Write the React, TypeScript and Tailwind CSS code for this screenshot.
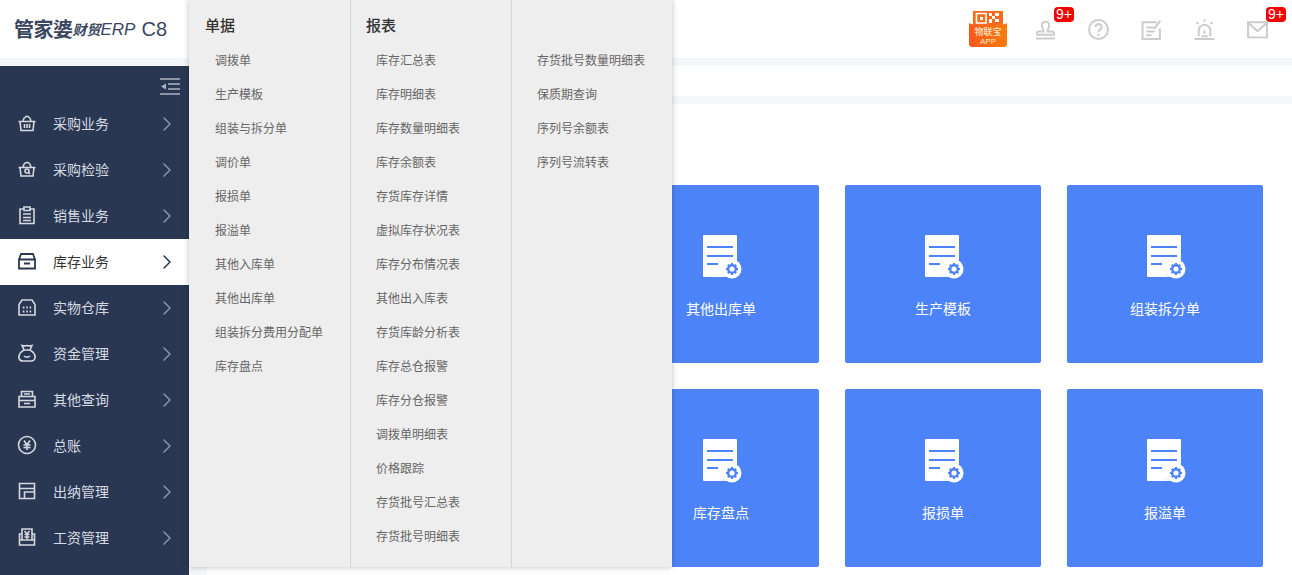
import { ChevronRight } from 'lucide-react';
import type { ReactNode } from 'react';

const font = "font-['Microsoft_YaHei','Noto_Sans_CJK_SC','Noto_Sans',sans-serif]";

const Stroke = ({ children, size = 20 }: { children: ReactNode; size?: number }) => (
  <svg width={size} height={size} viewBox="0 0 20 20" fill="none" stroke="currentColor" strokeWidth="1.6">
    {children}
  </svg>
);

const menuItems: { label: string; active?: boolean; icon: ReactNode }[] = [
  {
    label: '采购业务',
    icon: (
      <Stroke>
        <path d="M1.500 8.500h17M3 8.500l1 9h12l1-9M6 8.500c.5-3.500 2-5 4-5s3.500 1.500 4 5M8 3.500h4M7.500 11v4M10 11v4M12.500 11v4" />
      </Stroke>
    ),
  },
  {
    label: '采购检验',
    icon: (
      <Stroke>
        <path d="M1.500 8.500h17M3 8.500l1 8.500h12l1-8.500M6 8.500c.5-3.500 2-5 4-5s3.500 1.500 4 5" />
        <circle cx="10" cy="12" r="2" />
        <path d="M11.500 13.500l1.500 1.500" />
      </Stroke>
    ),
  },
  {
    label: '销售业务',
    icon: (
      <Stroke>
        <path d="M7 4H3v14.500h14V4h-4M7 2h6v3.500H7zM6 9h8M6 12.500h8M6 15.500h8" />
      </Stroke>
    ),
  },
  {
    label: '库存业务',
    active: true,
    icon: (
      <Stroke>
        <path strokeWidth="1.800" d="M2 8.500v9h16v-9zM2 8.500l2-5.500h12l2 5.500M7 12.500h6" />
      </Stroke>
    ),
  },
  {
    label: '实物仓库',
    icon: (
      <Stroke>
        <path d="M2 7.500v10.500h16V7.500L15 3H5z" />
        <path strokeWidth="1.800" d="M5.800 10.500h1.600M9.200 10.500h1.600M12.600 10.500h1.600M5.800 14.500h1.600M9.200 14.500h1.600M12.600 14.500h1.600" />
      </Stroke>
    ),
  },
  {
    label: '资金管理',
    icon: (
      <Stroke>
        <path d="M7 7C3.500 9 1.500 12 2 15c.3 2 2 3 4 3h8c2 0 3.700-1 4-3 .5-3-1.500-6-5-8l2-4.500c-2 .5-3.500.5-5 0-1.500.5-3 .5-5 0zM7 7h6M7 13c1.500 1.500 4.500 1.500 6 0" />
      </Stroke>
    ),
  },
  {
    label: '其他查询',
    icon: (
      <Stroke>
        <path d="M4.500 7V2.500h11V7M2 7.500h16v4H2zM2 11.500V18h16v-6.500M7 5h6M7 14.500h6" />
      </Stroke>
    ),
  },
  {
    label: '总账',
    icon: (
      <Stroke>
        <circle cx="10" cy="10" r="8.500" />
        <path d="M7 5.500l3 4.500 3-4.500M6.500 10h7M6.500 12.500h7M10 10v5" />
      </Stroke>
    ),
  },
  {
    label: '出纳管理',
    icon: (
      <Stroke>
        <path d="M2.500 2.500h15v15h-15zM2.500 7.500h15M7.500 17.500v-6.500h10" />
      </Stroke>
    ),
  },
  {
    label: '工资管理',
    icon: (
      <Stroke>
        <path d="M5 7H2.500v11h15V7H15M5 13V2h10v11M2.500 13h15M7.500 4l2.500 3 2.500-3M7.500 7.500h5M7.500 10h5M10 7v5" />
      </Stroke>
    ),
  },
];

const billItems = ['调拨单', '生产模板', '组装与拆分单', '调价单', '报损单', '报溢单', '其他入库单', '其他出库单', '组装拆分费用分配单', '库存盘点'];
const reportItems = [
  '库存汇总表', '库存明细表', '库存数量明细表', '库存余额表', '存货库存详情', '虚拟库存状况表', '库存分布情况表', '其他出入库表',
  '存货库龄分析表', '库存总仓报警', '库存分仓报警', '调拨单明细表', '价格跟踪', '存货批号汇总表', '存货批号明细表',
];
const reportItems2 = ['存货批号数量明细表', '保质期查询', '序列号余额表', '序列号流转表'];

function FlyoutColumn({ title, items, className }: { title?: string; items: string[]; className: string }) {
  return (
    <div className={`h-full ${className}`}>
      <div className="h-[43px] pt-[14px] text-[15px] leading-[22px] font-medium text-[#333]">{title}</div>
      <ul className="pl-[10px]">
        {items.map((item) => (
          <li key={item} className="h-[34px] text-[12px] leading-[34px] text-[#666] whitespace-nowrap">
            {item}
          </li>
        ))}
      </ul>
    </div>
  );
}

function DocIcon() {
  return (
    <svg width="40" height="44" viewBox="0 0 40 44">
      <defs>
        <linearGradient id="docfade" x1="0" y1="0" x2="1" y2="1">
          <stop offset="0.7" stopColor="#ffffff" />
          <stop offset="1" stopColor="#c5d7fd" />
        </linearGradient>
      </defs>
      <rect x="0" y="0" width="34" height="42" rx="1" fill="url(#docfade)" />
      <path d="M4 12h26M4 21h26M4 29h11" stroke="#4d83f9" strokeWidth="2" />
      <circle cx="29" cy="34" r="9.500" fill="#fff" />
      <circle cx="29" cy="34" r="3.800" fill="none" stroke="#4d83f9" strokeWidth="2.400" />
      <path d="M29 28v2M29 38v2M23 34h2M33 34h2M24.800 29.800l1.400 1.400M31.800 36.800l1.400 1.400M24.800 38.200l1.400-1.400M31.800 31.200l1.400-1.400" stroke="#4d83f9" strokeWidth="2" />
    </svg>
  );
}

function Card({ label }: { label: string }) {
  return (
    <div className="h-[178px] rounded-[2px] bg-[#4d83f9] flex flex-col items-center pt-[50px] pl-[4px]">
      <DocIcon />
      <div className="mt-[18px] -ml-[4px] text-[14px] leading-[22px] text-white">{label}</div>
    </div>
  );
}

function Badge() {
  return (
    <span className="absolute -top-[12px] left-[19px] w-5 h-[15px] rounded-[4px] bg-[#f40000] text-white text-[14px] leading-[15px] text-center font-['Liberation_Sans',sans-serif]">
      9+
    </span>
  );
}

export default function App() {
  return (
    <div className={`relative h-[575px] w-[1292px] overflow-hidden bg-white flex ${font}`}>
      {/* Left column */}
      <div className="w-[189px] shrink-0 flex flex-col">
        <div className="h-[58px] flex items-center pl-[14px] text-[#3a4660] whitespace-nowrap">
          <span className="text-[20px] leading-none font-bold tracking-[-0.5px]">管家婆</span>
          <span className="text-[14px] leading-none italic font-bold">财贸</span>
          <span className="text-[17px] leading-none italic font-['Liberation_Sans',sans-serif]">ERP</span>
          <span className="ml-[6px] text-[20px] leading-none font-['Liberation_Sans',sans-serif]">C8</span>
        </div>
        <div className="h-2 bg-[#f3f7f7]" />
        <div className="flex-1 bg-[#2a3752]">
          <div className="h-[35px] pt-3 flex items-start justify-end pr-[9px]">
            <svg width="20" height="17" viewBox="0 0 20 17" fill="none" stroke="#aeb4c0" strokeWidth="1.400">
              <path d="M0 1h20M8 6h12M8 11h12M0 16h20" />
              <path d="M1 8.500L6 5.500v6z" fill="#aeb4c0" stroke="none" />
            </svg>
          </div>
          {menuItems.map((m) => (
            <div
              key={m.label}
              className={`h-[46px] pb-[2px] flex items-center pl-[17px] pr-[10px] text-[14px] ${
                m.active ? 'bg-white text-[#333]' : 'text-[#d5dae3]'
              }`}
            >
              <span className={m.active ? 'text-[#2a3752]' : 'text-[#d5d8de]'}>{m.icon}</span>
              <span className="ml-4 flex-1">{m.label}</span>
              <ChevronRight size={24} strokeWidth={1.500} className={`mt-[2px] ${m.active ? 'text-[#2a3752]' : 'text-[#8593ad]'}`} />
            </div>
          ))}
        </div>
      </div>

      {/* Right column */}
      <div className="flex-1 flex flex-col">
        <div className="h-[58px] flex items-center justify-end pr-[25px] text-[#cccccc]">
          <div className="relative w-[38px] h-[38px] mr-[28px]">
            <svg width="38" height="38" viewBox="0 0 38 38" className="absolute inset-0">
              <defs>
                <linearGradient id="appfill" x1="0" y1="0" x2="1" y2="0">
                  <stop offset="0" stopColor="#f9581c" />
                  <stop offset="1" stopColor="#fd7a0a" />
                </linearGradient>
              </defs>
              <rect x="4" y="1" width="30" height="16" fill="#f96a1c" />
              <path d="M7.500 3.500h9.500v9.500H7.500z" fill="none" stroke="#fff" strokeWidth="1.600" />
              <rect x="11" y="7" width="3" height="3" fill="#fff" />
              <path d="M20 3h3v3h-3zM26 3h4v3h-4zM23 6h3v3h-3zM20 9h3v4h-3zM26 9h4v3h-4z" fill="#fff" />
              <path d="M0 13c6 4 32 4 38 0v22l-2 2H2l-2-2z" fill="url(#appfill)" />
            </svg>
            <div className="absolute left-0 right-0 top-[17px] text-center text-[9px] leading-[10px] text-[#ffe7c9] font-medium">物联宝</div>
            <div className="absolute left-0 right-0 top-[27px] text-center text-[8px] leading-[9px] text-[#ffe7c9] font-['Liberation_Sans',sans-serif]">APP</div>
          </div>

          <div className="relative w-5 h-5 mr-[33px]">
            <Stroke size={21}>
              <path strokeWidth="1.900" d="M8 11c0-1.500-1.500-2.500-1.500-5a3.500 3.500 0 0 1 7 0c0 2.500-1.500 3.500-1.500 5v1h4.500c1 0 1.500.5 1.500 1.500V15H2v-1.500c0-1 .5-1.500 1.500-1.500H8zM1 18.500h18" />
            </Stroke>
            <Badge />
          </div>
          <div className="w-5 h-5 mr-[33px]">
            <Stroke size={21}>
              <circle cx="10" cy="10" r="9" strokeWidth="1.900" />
              <path strokeWidth="1.900" d="M7.300 7.700A2.800 2.800 0 1 1 11 10.300c-.7.400-1 .9-1 1.700v.5" />
              <circle cx="10" cy="15" r=".5" />
            </Stroke>
          </div>
          <div className="w-5 h-5 mr-[33px]">
            <Stroke size={21}>
              <path strokeWidth="1.900" d="M15 3H1.500v16H18V9M5 8h7M5 12h8M5 15.500h5M12.500 9.500L18.500 1.500" />
            </Stroke>
          </div>
          <div className="w-5 h-5 mr-[33px]">
            <Stroke size={21}>
              <path strokeWidth="1.900" d="M4.500 16.500V11a5.500 5.500 0 0 1 11 0v5.500M0.500 19h19M10 11v3M10 0.500v2M2.500 3l1.500 2M17.500 3L16 5M7 16.500h6" />
            </Stroke>
          </div>
          <div className="relative w-5 h-5">
            <Stroke size={21}>
              <path strokeWidth="1.900" d="M1 3h18v14.500H1zM1 3.500l9 8 9-8" />
            </Stroke>
            <Badge />
          </div>
        </div>
        <div className="h-2 bg-[#f3f7f7]" />
        <div className="h-[30px]" />
        <div className="h-2 bg-[#f3f7f7]" />
        <div className="flex-1 flex">
          <div className="w-[18px] bg-[#f3f7f7]" />
          <div className="flex-1 pt-[81px] pr-[29px] grid grid-cols-[repeat(3,196px)] justify-end content-start gap-[26px]">
            {['其他出库单', '生产模板', '组装拆分单', '库存盘点', '报损单', '报溢单'].map((c) => (
              <Card key={c} label={c} />
            ))}
          </div>
        </div>
      </div>

      {/* Flyout menu over the page */}
      <div className="absolute left-[189px] top-0 w-[483px] h-[567px] flex bg-[#eeeeee] shadow-[0_0_6px_rgba(0,0,0,0.25)]">
        <FlyoutColumn title="单据" items={billItems} className="w-[162px] pl-4 border-r border-[#d4d4d4]" />
        <FlyoutColumn title="报表" items={reportItems} className="w-[161px] pl-[15px] border-r border-[#d4d4d4]" />
        <FlyoutColumn items={reportItems2} className="w-[160px] pl-[15px]" />
      </div>
    </div>
  );
}
